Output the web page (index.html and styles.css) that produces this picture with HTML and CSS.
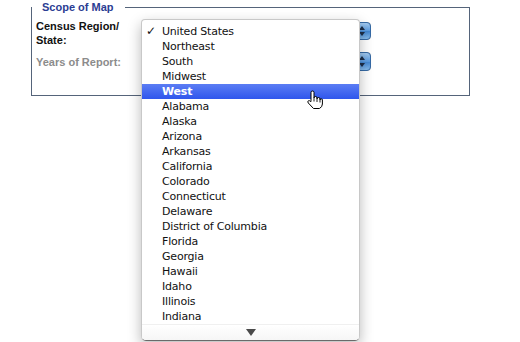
FILE: index.html
```html
<!DOCTYPE html>
<html lang="en">
<head>
    <meta charset="UTF-8">
    <title>Scope of Map</title>
    <link rel="stylesheet" href="styles.css">
</head>
<body>
    <div class="page">
        <fieldset class="scope">
            <legend>Scope of Map</legend>
            <div class="row row-region">
                <label class="field-label">Census Region/<br>State:</label>
                <div class="select">
                    <span class="stepper"></span>
                </div>
            </div>
            <div class="row row-years">
                <label class="field-label disabled">Years of Report:</label>
                <div class="select">
                    <span class="stepper"></span>
                </div>
            </div>
        </fieldset>

        <div class="menu">
            <ul class="menu-items">
                <li class="checked">United States</li>
                <li>Northeast</li>
                <li>South</li>
                <li>Midwest</li>
                <li class="active">West</li>
                <li>Alabama</li>
                <li>Alaska</li>
                <li>Arizona</li>
                <li>Arkansas</li>
                <li>California</li>
                <li>Colorado</li>
                <li>Connecticut</li>
                <li>Delaware</li>
                <li>District of Columbia</li>
                <li>Florida</li>
                <li>Georgia</li>
                <li>Hawaii</li>
                <li>Idaho</li>
                <li>Illinois</li>
                <li>Indiana</li>
            </ul>
            <div class="scroll-down"><span class="arrow"></span></div>
        </div>

        <svg class="cursor" width="18" height="19" viewBox="0 0 18 19">
            <path d="M6 10.5V2.5a1.5 1.5 0 0 1 3 0V8a1.5 1.5 0 0 1 3 0v1a1.5 1.5 0 0 1 3 0v1a1.2 1.2 0 0 1 2.4 0v4q0 3-3 4.5H8.5L3.3 13q-1-1.3 0-2.2q1-.6 2.7.8z" fill="#fff" stroke="#000" stroke-width="1" stroke-linejoin="round"/>
            <path d="M9 8v3.5M12 9v3M15 10v2.5" stroke="#000" stroke-width="0.9" fill="none"/>
        </svg>
    </div>
</body>
</html>
```

FILE: styles.css
```css
body {
    margin: 0;
    background-color: #ffffff;
    font-family: 'Liberation Sans', Arial, sans-serif;
}

.page {
    position: relative;
    width: 520px;
    height: 342px;
    padding-left: 31px;
    box-sizing: border-box;
}

.scope {
    width: 439px;
    height: 96px;
    box-sizing: border-box;
    margin: 0;
    padding: 0;
    border: 1px solid #55647a;
}

.scope legend {
    padding: 0 11px 0 10px;
    color: #2b3d93;
    font-size: 11px;
    font-weight: bold;
    line-height: 14px;
}

.row {
    display: flex;
    align-items: flex-start;
    padding-left: 4px;
}

.row-region {
    margin-top: 5px;
}

.row-years {
    margin-top: 5px;
}

.field-label {
    width: 114px;
    flex: none;
    color: #111111;
    font-size: 11px;
    font-weight: bold;
    line-height: 14px;
}

.row-years .field-label {
    margin-top: 3px;
}

.field-label.disabled {
    color: #8c8c8c;
}

.select {
    position: relative;
    width: 221px;
    height: 18px;
    margin-top: 3px;
    border: 1px solid #a9a9a9;
    border-radius: 4px;
    box-sizing: border-box;
    background-color: #ffffff;
}

.row-years .select {
    margin-top: 0;
    height: 19px;
}

.stepper {
    position: absolute;
    right: -1px;
    top: -1px;
    bottom: -1px;
    width: 17px;
    border-radius: 4px;
    border: 1px solid #356aa6;
    box-sizing: border-box;
    background: linear-gradient(#a4cbf0, #5a9be0 50%, #3f84d0 51%, #86bbec);
}

.stepper::before,
.stepper::after {
    content: "";
    position: absolute;
    left: 4px;
    width: 0;
    height: 0;
    border-left: 3px solid transparent;
    border-right: 3px solid transparent;
}

.stepper::before {
    top: 3px;
    border-bottom: 4px solid #1d2e48;
}

.stepper::after {
    bottom: 3px;
    border-top: 4px solid #1d2e48;
}

.menu {
    position: absolute;
    left: 141px;
    top: 19px;
    width: 219px;
    height: 322px;
    box-sizing: border-box;
    border: 1px solid #c8c8c8;
    border-bottom-color: #6a6a6a;
    border-radius: 4px 4px 5px 5px;
    background-color: #ffffff;
    box-shadow: 0 5px 14px rgba(0, 0, 0, 0.28);
    overflow: hidden;
    font-family: 'DejaVu Sans', sans-serif;
    font-size: 11px;
    letter-spacing: -0.2px;
    color: #111111;
}

.menu-items {
    list-style: none;
    margin: 0;
    padding: 4px 0 0 0;
    height: 300px;
}

.menu-items li {
    position: relative;
    height: 15px;
    line-height: 15px;
    padding-left: 20px;
    white-space: nowrap;
}

.menu-items li.checked::before {
    content: "\2713";
    position: absolute;
    left: 4px;
    top: 0;
    font-size: 12px;
    font-weight: bold;
}

.menu-items li.active {
    background: linear-gradient(#5b7df4, #2f56ec);
    color: #ffffff;
    font-weight: bold;
}

.scroll-down {
    height: 16px;
    display: flex;
    justify-content: center;
    align-items: center;
    border-top: 1px solid #f0f0f0;
    background: linear-gradient(#ffffff, #f6f6f6);
    box-sizing: border-box;
}

.arrow {
    width: 0;
    height: 0;
    border-left: 5px solid transparent;
    border-right: 5px solid transparent;
    border-top: 7px solid #4a4a4a;
}

.cursor {
    position: absolute;
    left: 305px;
    top: 90px;
}
```
